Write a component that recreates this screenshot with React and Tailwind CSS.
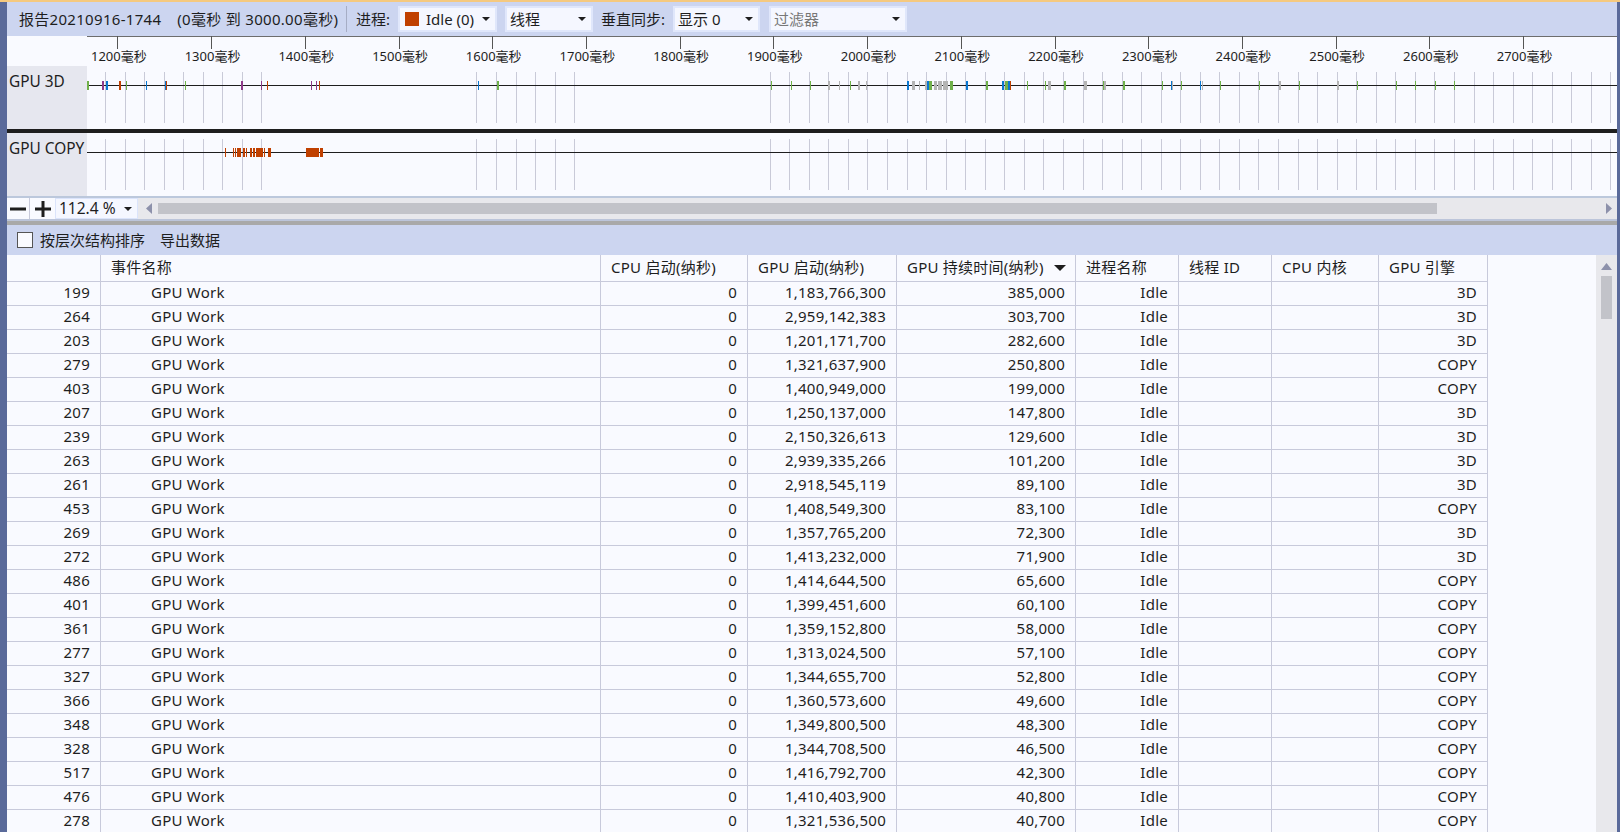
const FONT = '"Noto Sans", "Noto Sans CJK SC", sans-serif';

const GREEN = "#6fb04a";
const BLUE = "#0a77d0";
const GRAY = "#b4b4b4";
const PURPLE = "#8e3b8a";
const RED = "#c04000";

const bars3d = [
  [87, 2, GREEN], [102, 2, PURPLE], [106, 2, BLUE], [119, 2, RED], [126, 1, GREEN], [146, 1, BLUE],
  [165, 1, BLUE], [166, 1, RED], [185, 1, GREEN], [241, 2, PURPLE], [261, 1, PURPLE], [267, 1, RED],
  [311, 1, PURPLE], [316, 1, PURPLE], [319, 1, RED], [478, 1, BLUE], [497, 2, GREEN], [771, 1, GREEN],
  [791, 1, GREEN], [810, 1, GREEN], [828, 2, GRAY], [839, 1, GRAY], [850, 1, GREEN], [858, 2, GRAY],
  [866, 1, GRAY], [907, 2, BLUE], [912, 3, GRAY], [919, 1, GRAY], [925, 2, GRAY], [927, 2, BLUE],
  [929, 3, GREEN], [934, 3, GRAY], [938, 4, GRAY], [943, 5, GRAY], [950, 3, GREEN], [966, 2, BLUE],
  [986, 2, GREEN], [1002, 2, BLUE], [1005, 3, GREEN], [1008, 2, BLUE], [1010, 1, RED], [1027, 1, GREEN],
  [1045, 1, GREEN], [1048, 3, GRAY], [1064, 2, GREEN], [1084, 3, GRAY], [1103, 1, GREEN], [1104, 2, GRAY],
  [1123, 2, GREEN], [1162, 1, GREEN], [1171, 1, BLUE], [1172, 1, GRAY], [1181, 1, GREEN], [1200, 1, BLUE],
  [1202, 1, GRAY], [1220, 1, GREEN], [1259, 1, GREEN], [1279, 2, GRAY], [1299, 1, GREEN], [1337, 2, GRAY],
  [1357, 1, GREEN], [1396, 1, GREEN], [1415, 1, GREEN], [1435, 1, GREEN], [1454, 1, GREEN],
];

const barsCopy = [
  [225, 1], [233, 1], [235, 1], [237, 4], [243, 2], [246, 1], [250, 2], [253, 2], [256, 7], [264, 1],
  [268, 3], [306, 13], [320, 3],
];

const gridK = [0, 1, 2, 3, 4, 5, 6, 7, 8, 19, 20, 21, 22, 23, 24];
for (let k = 34; k <= 77; k++) gridK.push(k);
const gridX = gridK.map((k) => Math.round(105 + 19.55 * k));

const ticks = [1200, 1300, 1400, 1500, 1600, 1700, 1800, 1900, 2000, 2100, 2200, 2300, 2400, 2500, 2600, 2700];

const rows = [
  [199, "1,183,766,300", "385,000", "3D"], [264, "2,959,142,383", "303,700", "3D"],
  [203, "1,201,171,700", "282,600", "3D"], [279, "1,321,637,900", "250,800", "COPY"],
  [403, "1,400,949,000", "199,000", "COPY"], [207, "1,250,137,000", "147,800", "3D"],
  [239, "2,150,326,613", "129,600", "3D"], [263, "2,939,335,266", "101,200", "3D"],
  [261, "2,918,545,119", "89,100", "3D"], [453, "1,408,549,300", "83,100", "COPY"],
  [269, "1,357,765,200", "72,300", "3D"], [272, "1,413,232,000", "71,900", "3D"],
  [486, "1,414,644,500", "65,600", "COPY"], [401, "1,399,451,600", "60,100", "COPY"],
  [361, "1,359,152,800", "58,000", "COPY"], [277, "1,313,024,500", "57,100", "COPY"],
  [327, "1,344,655,700", "52,800", "COPY"], [366, "1,360,573,600", "49,600", "COPY"],
  [348, "1,349,800,500", "48,300", "COPY"], [328, "1,344,708,500", "46,500", "COPY"],
  [517, "1,416,792,700", "42,300", "COPY"], [476, "1,410,403,900", "40,800", "COPY"],
  [278, "1,321,536,500", "40,700", "COPY"],
];

const COLS = "grid grid-cols-[94px_500px_147px_149px_179px_103px_93px_107px_109px] w-[1481px]";

function Caret({ className = "" }) {
  return (
    <svg width="8" height="4" viewBox="0 0 8 4" className={className}>
      <path d="M0 0h8L4 4z" fill="#1e1e1e" />
    </svg>
  );
}

function Dropdown({ className, children }) {
  return (
    <div className={`h-[26px] flex items-center justify-between bg-[#f5f7ff] border-2 border-[#e0e7fb] pl-[3px] pr-[5px] ${className}`}>
      {children}
      <Caret />
    </div>
  );
}

function Track({ top, lineY, barY, bars, label }) {
  const gridTop = top + 6;
  return (
    <div className="flex h-[63px]">
      <div className="w-[80px] bg-[#e6e7ef] pl-[2px] pt-[6px] text-[15.4px] leading-[20px] whitespace-nowrap">{label}</div>
      <svg width="1530" height="63" viewBox={`87 ${top} 1530 63`} shapeRendering="crispEdges" className="block">
        {gridX.map((x) => (
          <rect key={x} x={x} y={gridTop} width="1" height="51" fill="#c9cad8" />
        ))}
        <rect x="87" y={lineY} width="1530" height="1" fill="#1e1e1e" />
        {bars.map(([x, w, c], i) => (
          <rect key={i} x={x} y={barY} width={w} height="9" fill={c || RED} />
        ))}
      </svg>
    </div>
  );
}

function HeadCell({ children, border = true }) {
  return (
    <div className={`h-[27px] border-b border-[#c8cadb] pl-[10px] pb-px flex items-center whitespace-nowrap ${border ? "border-r" : ""}`}>
      {children}
    </div>
  );
}

function Cell({ children, left = false }) {
  return (
    <div className={`h-[24px] border-b border-r border-[#c8cadb] pb-[2px] flex items-center whitespace-nowrap ${left ? "pl-[50px]" : "justify-end pr-[10px]"}`}>
      {children}
    </div>
  );
}

export default function App() {
  return (
    <div className="w-[1620px] h-[832px] overflow-hidden flex flex-col text-[#1e1e1e] text-[15px] bg-[#5a6a9a]" style={{ fontFamily: FONT }}>
      <div className="h-[2px] bg-[#f5c97f] shrink-0" />
      <div className="flex-1 flex min-h-0">
        <div className="w-[7px] shrink-0" />
        <div className="w-[1610px] flex flex-col bg-[#f9faff]">
          {/* top toolbar */}
          <div className="h-[34px] shrink-0 bg-[#ccd5f0] flex items-center pl-[12px] whitespace-nowrap">
            <div className="w-[327px] tracking-[0.3px]">
              <span>报告20210916-1744</span>
              <span className="ml-[16px]">(0毫秒 到 3000.00毫秒)</span>
            </div>
            <div className="w-px h-[26px] bg-[#a6adc5]" />
            <div className="ml-[9px] w-[42px]">进程:</div>
            <Dropdown className="w-[99px] pl-[5px]">
              <div className="flex items-center gap-[7px]">
                <span className="w-[14px] h-[14px] bg-[#c04000]" />
                <span>Idle (0)</span>
              </div>
            </Dropdown>
            <Dropdown className="w-[88px] ml-[8px]">
              <span>线程</span>
            </Dropdown>
            <div className="ml-[8px] w-[72px]">垂直同步:</div>
            <Dropdown className="w-[87px]">
              <span>显示 0</span>
            </Dropdown>
            <Dropdown className="w-[138px] ml-[9px]">
              <span className="text-[#777777]">过滤器</span>
            </Dropdown>
          </div>

          {/* ruler */}
          <div className="h-[30px] shrink-0 relative overflow-hidden">
            <div className="ml-[80px] h-px bg-[#6d6d6d]" />
            <div className="flex -mt-px pl-[64px] w-[1700px]">
              {ticks.map((t) => (
                <div key={t} className="w-[93.73px] shrink-0 flex flex-col items-center">
                  <div className="w-px h-[13px] bg-[#555555]" />
                  <div className="text-[13px] leading-[15px] whitespace-nowrap ml-[2px]">{t}毫秒</div>
                </div>
              ))}
            </div>
          </div>

          {/* tracks */}
          <Track top={66} lineY={85} barY={81} bars={bars3d} label="GPU 3D" />
          <div className="h-[4px] shrink-0 bg-[#1e1e1e]" />
          <Track top={133} lineY={152} barY={148} bars={barsCopy} label="GPU COPY" />

          {/* zoom and horizontal scroll */}
          <div className="h-[25px] shrink-0 border-t-2 border-b-2 border-t-[#bcc8dc] border-b-[#bcc5da] bg-[#e8e8ec] flex">
            <div className="w-[23px] bg-[#f9faff] border-r border-[#c8cadb] flex items-center justify-center">
              <svg width="16" height="16" viewBox="0 0 16 16"><rect x="0" y="6.5" width="16" height="3" fill="#1e1e1e" /></svg>
            </div>
            <div className="w-[25px] bg-[#f9faff] flex items-center justify-center">
              <svg width="16" height="16" viewBox="0 0 16 16"><path d="M0 6.5h6.5V0h3v6.5H16v3H9.5V16h-3V9.5H0z" fill="#1e1e1e" /></svg>
            </div>
            <div className="w-[83px] bg-[#f5f7ff] border border-[#dbe4fb] flex items-center justify-between pl-[3px] pr-[5px] text-[15.5px]">
              <span>112.4 %</span>
              <Caret />
            </div>
            <div className="flex-1 flex items-center pl-[8px] pr-[5px]">
              <svg width="6" height="11" viewBox="0 0 6 11" className="shrink-0"><path d="M6 0v11L0 5.5z" fill="#8d91ab" /></svg>
              <div className="ml-[6px] w-[1279px] h-[11px] bg-[#c2c3c9]" />
              <svg width="6" height="11" viewBox="0 0 6 11" className="ml-auto shrink-0"><path d="M0 0v11l6-5.5z" fill="#8d91ab" /></svg>
            </div>
          </div>

          {/* splitter */}
          <div className="h-[4px] shrink-0 bg-[#a9a9a9]" />

          {/* second toolbar */}
          <div className="h-[30px] shrink-0 bg-[#ccd5f0] flex items-center pl-[10px]">
            <span className="w-[16px] h-[16px] border border-[#555555] bg-[#f9faff]" />
            <span className="ml-[7px]">按层次结构排序</span>
            <span className="ml-[15px]">导出数据</span>
          </div>

          {/* table */}
          <div className="flex-1 flex min-h-0 overflow-hidden">
            <div className="flex-1 min-w-0 tracking-[0.25px]">
              <div className={COLS}>
                <HeadCell />
                <HeadCell>事件名称</HeadCell>
                <HeadCell>CPU 启动(纳秒)</HeadCell>
                <HeadCell>GPU 启动(纳秒)</HeadCell>
                <div className="h-[27px] border-b border-r border-[#c8cadb] pl-[10px] pr-[9px] pb-px flex items-center justify-between whitespace-nowrap">
                  <span>GPU 持续时间(纳秒)</span>
                  <svg width="12" height="6" viewBox="0 0 12 6"><path d="M0 0h12L6 6z" fill="#1e1e1e" /></svg>
                </div>
                <HeadCell>进程名称</HeadCell>
                <HeadCell>线程 ID</HeadCell>
                <HeadCell>CPU 内核</HeadCell>
                <HeadCell>GPU 引擎</HeadCell>
              </div>
              {rows.map(([id, start, dur, eng]) => (
                <div key={id} className={COLS}>
                  <Cell>{id}</Cell>
                  <Cell left>GPU Work</Cell>
                  <Cell>0</Cell>
                  <Cell>{start}</Cell>
                  <Cell>{dur}</Cell>
                  <Cell>Idle</Cell>
                  <Cell />
                  <Cell />
                  <Cell>{eng}</Cell>
                </div>
              ))}
            </div>
            <div className="w-[21px] shrink-0 bg-[#e8e8ec] pl-[5px] pt-[8px] flex flex-col">
              <svg width="11" height="7" viewBox="0 0 11 7"><path d="M0 7h11L5.5 0z" fill="#8d91ab" /></svg>
              <div className="mt-[6px] w-[11px] h-[43px] bg-[#c2c3c9]" />
            </div>
          </div>
        </div>
        <div className="w-[3px] shrink-0" />
      </div>
    </div>
  );
}
